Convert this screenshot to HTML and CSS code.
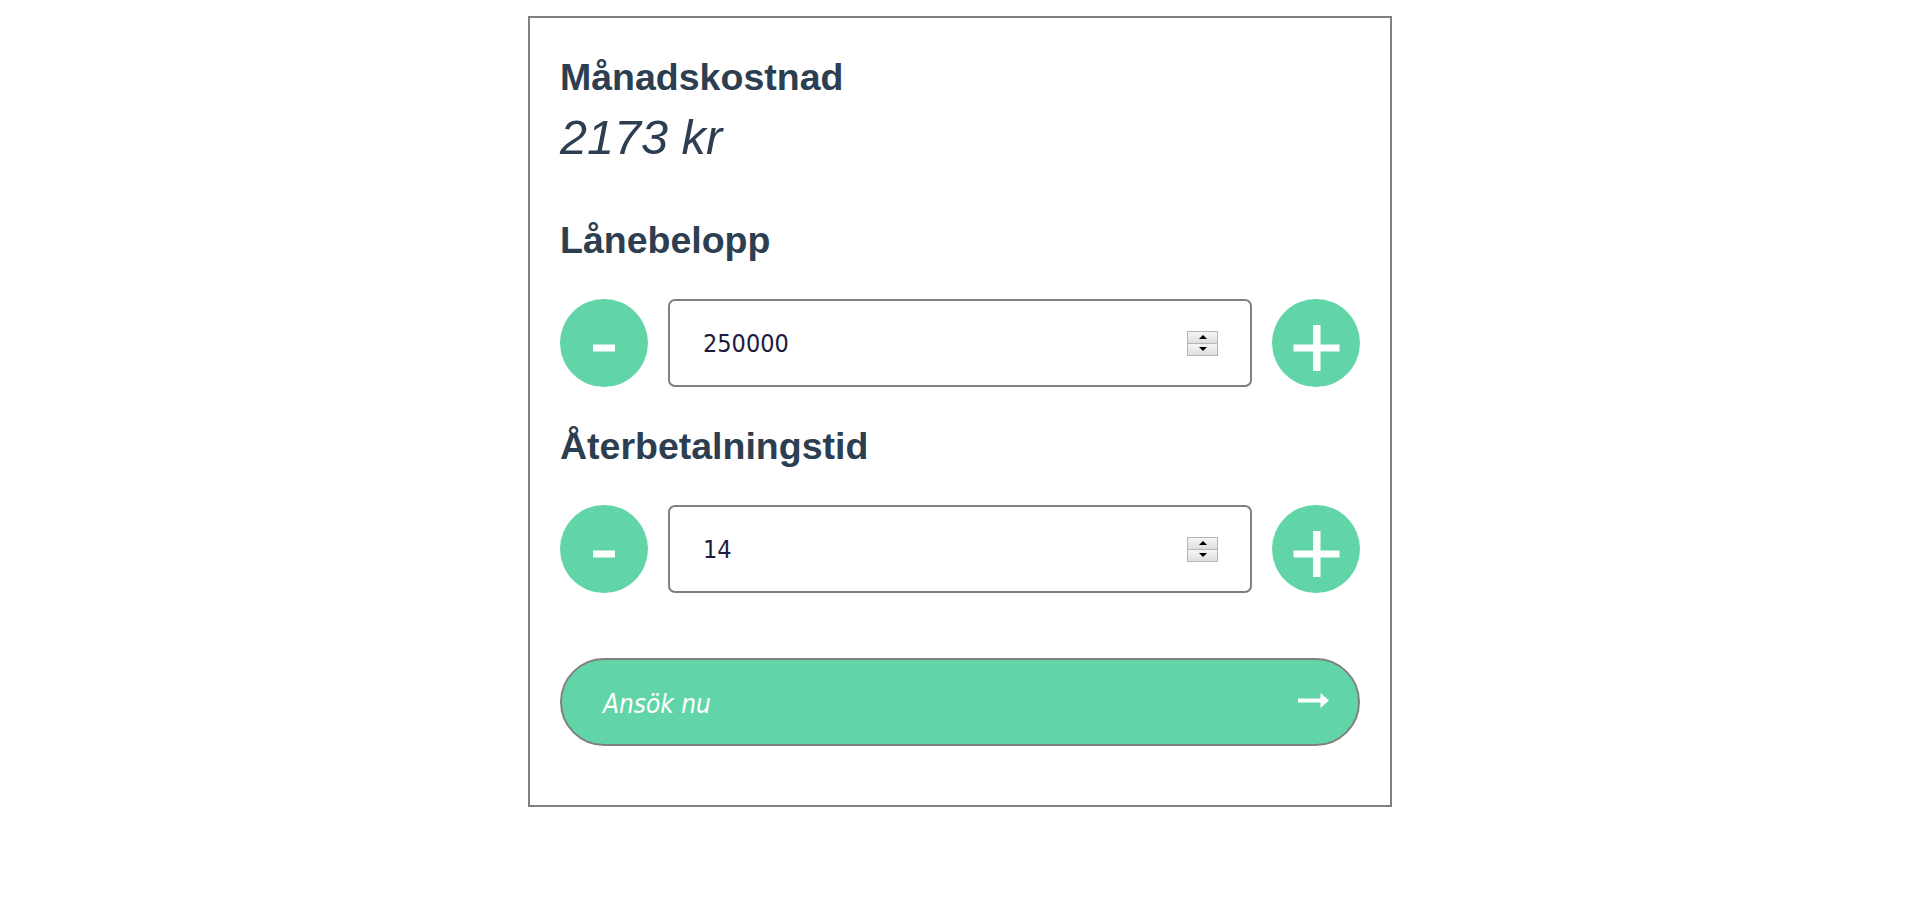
FILE: index.html
```html
<!DOCTYPE html>
<html lang="sv">
<head>
<meta charset="utf-8">
<title>Lånekalkylator</title>
<link rel="stylesheet" href="styles.css">
</head>
<body>
<main class="card">
  <section class="summary">
    <h2 class="title">Månadskostnad</h2>
    <p class="cost">2173 kr</p>
  </section>

  <section class="group group-first">
    <h2 class="title">Lånebelopp</h2>
    <div class="stepper">
      <button class="round" aria-label="Minska">
        <svg width="88" height="88" viewBox="0 0 88 88"><rect x="33" y="45.5" width="22" height="7" fill="#fff"/></svg>
      </button>
      <div class="field">
        <input type="number" value="250000">
        <span class="spin"><span class="spin-btn"><i class="tri up"></i></span><span class="spin-btn lower"><i class="tri down"></i></span></span>
      </div>
      <button class="round" aria-label="Öka">
        <svg width="88" height="88" viewBox="0 0 88 88"><rect x="21.5" y="45.5" width="46" height="7" fill="#fff"/><rect x="41" y="26" width="7.5" height="46" fill="#fff"/></svg>
      </button>
    </div>
  </section>

  <section class="group">
    <h2 class="title">Återbetalningstid</h2>
    <div class="stepper">
      <button class="round" aria-label="Minska">
        <svg width="88" height="88" viewBox="0 0 88 88"><rect x="33" y="45.5" width="22" height="7" fill="#fff"/></svg>
      </button>
      <div class="field">
        <input type="number" value="14">
        <span class="spin"><span class="spin-btn"><i class="tri up"></i></span><span class="spin-btn lower"><i class="tri down"></i></span></span>
      </div>
      <button class="round" aria-label="Öka">
        <svg width="88" height="88" viewBox="0 0 88 88"><rect x="21.5" y="45.5" width="46" height="7" fill="#fff"/><rect x="41" y="26" width="7.5" height="46" fill="#fff"/></svg>
      </button>
    </div>
  </section>

  <button class="apply">
    <span class="apply-text">Ansök nu</span>
    <svg class="arrow" width="31" height="15" viewBox="0 0 31 15"><rect x="0" y="5.5" width="24" height="4" fill="#fff"/><polygon points="22.5,0 31,7.5 22.5,15" fill="#fff"/></svg>
  </button>
</main>
</body>
</html>
```

FILE: styles.css
```css
html, body {
  margin: 0;
  background: #fff;
}

body {
  font-family: "Liberation Sans", Arial, sans-serif;
}

.card {
  box-sizing: border-box;
  width: 864px;
  margin: 16px auto 0;
  border: 2px solid #808080;
  padding: 37px 30px 59px;
  background: #fff;
}

.title {
  margin: 0;
  font-size: 37.5px;
  line-height: 44px;
  font-weight: 700;
  color: #2c3e50;
}

.cost {
  margin: 10px 0 0;
  font-size: 48.6px;
  line-height: 56px;
  font-style: italic;
  font-weight: 400;
  color: #2c3e50;
}

.group {
  margin-top: 37px;
}

.group-first {
  margin-top: 53px;
}

.stepper {
  display: flex;
  align-items: center;
  gap: 20px;
  margin-top: 37px;
  height: 88px;
}

.round {
  flex: 0 0 88px;
  width: 88px;
  height: 88px;
  padding: 0;
  border: none;
  border-radius: 50%;
  background: #62d5a8;
  display: flex;
  align-items: center;
  justify-content: center;
  cursor: pointer;
}

.round svg {
  display: block;
}

.field {
  flex: 1;
  min-width: 0;
  box-sizing: border-box;
  height: 88px;
  border: 2px solid #808080;
  border-radius: 7px;
  display: flex;
  align-items: center;
  padding: 0 32px 0 33px;
  background: #fff;
}

.field input {
  flex: 1;
  min-width: 0;
  border: none;
  outline: none;
  padding: 0;
  margin: 0;
  background: transparent;
  font-family: "DejaVu Sans Condensed", "DejaVu Sans", sans-serif;
  font-size: 25px;
  color: #1d1b40;
  -moz-appearance: textfield;
  appearance: textfield;
}

.field input::-webkit-inner-spin-button,
.field input::-webkit-outer-spin-button {
  -webkit-appearance: none;
  margin: 0;
}

.spin {
  flex: 0 0 31px;
  width: 31px;
  height: 25px;
  box-sizing: border-box;
  border: 1px solid #b6b6b6;
  display: flex;
  flex-direction: column;
  background: #fff;
}

.spin-btn {
  flex: 1;
  display: flex;
  align-items: center;
  justify-content: center;
  background: linear-gradient(#f6f6f6, #dedede);
}

.spin-btn.lower {
  border-top: 1px solid #b6b6b6;
}

.tri {
  width: 0;
  height: 0;
  border-left: 4px solid transparent;
  border-right: 4px solid transparent;
}

.tri.up {
  border-bottom: 4px solid #000;
}

.tri.down {
  border-top: 4px solid #000;
}

.apply {
  margin-top: 65px;
  width: 100%;
  height: 88px;
  box-sizing: border-box;
  border: 2px solid #808080;
  border-radius: 44px;
  background: #62d5a8;
  display: flex;
  align-items: center;
  justify-content: space-between;
  padding: 0 29px 0 41px;
  font-family: "DejaVu Sans Condensed", "DejaVu Sans", sans-serif;
  font-style: italic;
  font-size: 26px;
  color: #fff;
  cursor: pointer;
}

.apply-text {
  padding-top: 4px;
}

.arrow {
  display: block;
  margin-bottom: 4px;
}
```
